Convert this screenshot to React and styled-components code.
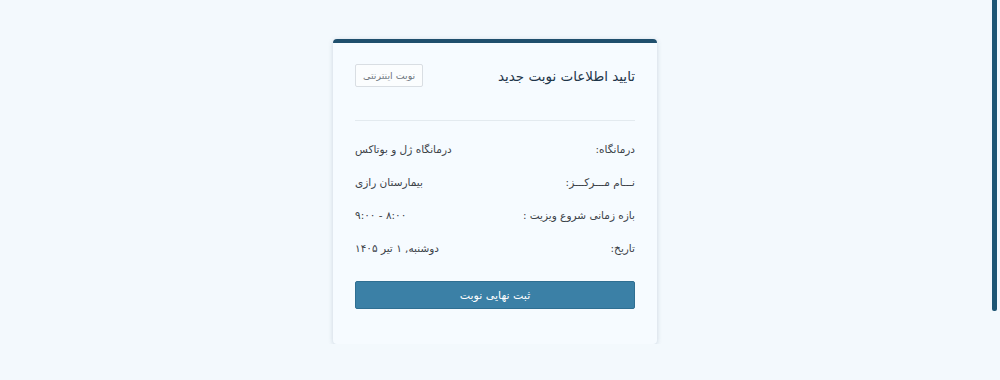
import styled, { createGlobalStyle } from 'styled-components'

const GlobalStyle = createGlobalStyle`
  html, body {
    margin: 0;
    padding: 0;
    background: #f3f9fd;
    font-family: "DejaVu Sans", "Noto Sans", sans-serif;
  }
`

const Page = styled.div`
  display: flex;
  justify-content: center;
  padding: 39px 10px 0 0;
`

// stands in for the page's custom scrollbar thumb
const ScrollThumb = styled.div`
  position: fixed;
  top: 0;
  right: 3px;
  width: 5px;
  height: 311px;
  border-radius: 0 0 2px 2px;
  background: #1e5673;
`

const Card = styled.div`
  direction: rtl;
  width: 324px;
  box-sizing: border-box;
  background: #f6fbff;
  border-top: 4px solid #1f4f6d;
  border-radius: 4px;
  box-shadow: 0 1px 5px rgba(40, 70, 100, 0.2);
  padding: 20px 22px 35px;
`

const Header = styled.div`
  display: flex;
  justify-content: space-between;
  align-items: center;
  padding-bottom: 33px;
  border-bottom: 1px solid #e3eaef;
  margin-top: 1px;
`

const Title = styled.h2`
  margin: 0;
  font-size: 13.5px;
  font-weight: normal;
  color: #1e3549;
`

const Badge = styled.span`
  font-size: 9.5px;
  color: #6f7780;
  border: 1px solid #d9dee3;
  border-radius: 2px;
  padding: 5px 7px;
  background: #fbfdfe;
`

const Rows = styled.div`
  display: flex;
  flex-direction: column;
  gap: 21px;
  padding-top: 22px;
`

const Row = styled.div`
  display: flex;
  justify-content: space-between;
  align-items: center;
  font-size: 10.5px;
  color: #3b4248;
`

const Submit = styled.button`
  display: block;
  width: 100%;
  margin-top: 27px;
  height: 28px;
  border: 1px solid #2f6f92;
  border-radius: 2px;
  background: #3b80a6;
  color: #ffffff;
  font-family: inherit;
  font-size: 11px;
`

const rows = [
  ['درمانگاه:', 'درمانگاه ژل و بوتاکس'],
  ['نـــام مـــرکـــز:', 'بیمارستان رازی'],
  ['بازه زمانی شروع ویزیت :', '۸:۰۰ - ۹:۰۰'],
  ['تاریخ:', 'دوشنبه, ۱ تیر ۱۴۰۵'],
]

export default function App () {
  return (
    <>
      <GlobalStyle />
      <ScrollThumb />
      <Page>
        <Card>
          <Header>
            <Title>تایید اطلاعات نوبت جدید</Title>
            <Badge>نوبت اینترنتی</Badge>
          </Header>
          <Rows>
            {rows.map(([label, value]) => (
              <Row key={label}>
                <span>{label}</span>
                <span>{value}</span>
              </Row>
            ))}
          </Rows>
          <Submit>ثبت نهایی نوبت</Submit>
        </Card>
      </Page>
    </>
  )
}
